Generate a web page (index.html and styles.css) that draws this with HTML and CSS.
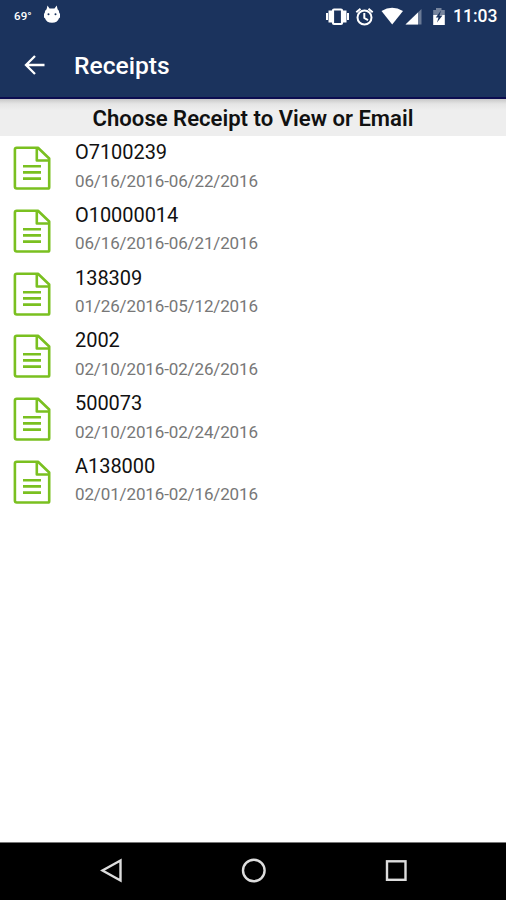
FILE: index.html
```html
<!DOCTYPE html>
<html lang="en">
<head>
<meta charset="utf-8">
<title>Receipts</title>
<link rel="stylesheet" href="styles.css">
</head>
<body>
<svg class="defs" width="0" height="0" aria-hidden="true">
  <symbol id="doc" viewBox="0 0 40 46">
    <path d="M4.8 2.7H26L37.2 13.5V42.2Q37.2 43.5 35.9 43.5H4.8Q2.9 43.5 2.9 41.6V4.6Q2.9 2.7 4.8 2.7ZM24.8 3V15.5H37M11 21.2H29M11 27.4H29M11 33.6H29" fill="none" stroke="#7ac020" stroke-width="2.6" stroke-linejoin="round"/>
  </symbol>
</svg>
<header class="top">
  <div class="status">
    <span class="temp">69°</span>
    <svg class="cat" width="18" height="20" viewBox="0 0 18 20"><path fill="#fff" fill-rule="evenodd" d="M4.5 1.5 6.5 4.5H11.5L13.7 1.5 14.6 5.2Q16.3 6.5 16.3 9L17 9.8V13.5L16 14.2Q14.5 18.8 9 18.8T2 14.2L1 13.5V9.8L1.7 9Q1.7 6.5 3.6 5.2ZM5.5 9.2A1 1 0 1 0 5.5 11.2A1 1 0 1 0 5.5 9.2ZM12.5 9.2A1 1 0 1 0 12.5 11.2A1 1 0 1 0 12.5 9.2Z"/></svg>
    <svg class="indicators" width="124" height="24" viewBox="0 0 124 24">
      <g fill="#fff">
        <path d="M0 11H2V18H0ZM2.5 8.5H6V20.5H2.5ZM21 11H23V18H21ZM17 8.5H20.5V20.5H17Z"/>
        <rect x="7" y="7.5" width="9" height="14.5" rx="1" fill="none" stroke="#fff" stroke-width="2.2"/>
        <path d="M55.5 9Q66 2.5 77 9L66.2 22.5Z"/>
        <path d="M95.5 7V22.5H79.5Z" fill-opacity=".35"/>
        <path d="M92 10.5V22.5H79.5Z"/>
        <path d="M107.2 8H110V6H115.5V8H118.8V13H107.2Z" fill-opacity=".4"/>
        <path d="M107.2 13H118.8V23H107.2Z"/>
      </g>
      <path d="M115 8.5 109.8 15.5H112.5L111 20.5 116.5 13.5H113.5Z" fill="#1b335d"/>
      <g fill="none" stroke="#fff" stroke-width="2">
        <circle cx="38.5" cy="15.5" r="7"/>
        <path d="M30.3 10.2 34.5 6.7M46.7 10.2 42.5 6.7M38.3 11V16L42 18.2"/>
      </g>
    </svg>
    <span class="clock">11:03</span>
  </div>
  <div class="bar">
    <svg class="back" width="22" height="22" viewBox="0 0 22 22"><path d="M20.5 11H2.5M11 2 2 11 11 20" fill="none" stroke="#fff" stroke-width="2.3"/></svg>
    <h1>Receipts</h1>
  </div>
</header>
<main>
  <h2>Choose Receipt to View or Email</h2>
  <ul class="list">
    <li><svg class="doc"><use href="#doc"/></svg><div><p class="num">O7100239</p><p class="date">06/16/2016-06/22/2016</p></div></li>
    <li><svg class="doc"><use href="#doc"/></svg><div><p class="num">O10000014</p><p class="date">06/16/2016-06/21/2016</p></div></li>
    <li><svg class="doc"><use href="#doc"/></svg><div><p class="num">138309</p><p class="date">01/26/2016-05/12/2016</p></div></li>
    <li><svg class="doc"><use href="#doc"/></svg><div><p class="num">2002</p><p class="date">02/10/2016-02/26/2016</p></div></li>
    <li><svg class="doc"><use href="#doc"/></svg><div><p class="num">500073</p><p class="date">02/10/2016-02/24/2016</p></div></li>
    <li><svg class="doc"><use href="#doc"/></svg><div><p class="num">A138000</p><p class="date">02/01/2016-02/16/2016</p></div></li>
  </ul>
</main>
<nav class="nav">
  <svg width="26" height="26" viewBox="0 0 26 26"><path d="M22.5 2.5V22.5L4.5 12.5Z"/></svg>
  <svg width="26" height="26" viewBox="0 0 26 26"><circle cx="12.8" cy="12.5" r="10.8"/></svg>
  <svg width="26" height="26" viewBox="0 0 26 26"><rect x="4" y="3.3" width="18.5" height="18.5"/></svg>
</nav>
</body>
</html>
```

FILE: styles.css
```css
* { box-sizing: border-box; margin: 0; padding: 0; }
body {
  display: flex;
  flex-direction: column;
  height: 900px;
  overflow: hidden;
  background: #fff;
  color: #111;
  font-family: Roboto, "Liberation Sans", sans-serif;
}
.defs { position: absolute; }
.top {
  height: 99px;
  background: #1b335d;
  border-bottom: 2px solid #0c0d50;
  color: #fff;
}
.status {
  display: flex;
  align-items: center;
  height: 32px;
  padding: 0 9px 0 14px;
}
.temp { width: 29px; margin-top: -1px; font-size: 11.5px; font-weight: 500; letter-spacing: .1px; }
.cat { margin-top: -4px; }
.indicators { margin: -5px 0 0 auto; }
.clock { width: 44px; margin-left: 3px; font-size: 17.5px; font-weight: 500; white-space: nowrap; }
.bar { display: flex; align-items: center; height: 65px; padding-left: 24px; }
.back { margin-right: 28px; }
h1 { padding-top: 2px; font-size: 24.6px; font-weight: 500; line-height: 30px; }
h2 {
  height: 37px;
  padding-top: 1px;
  background: linear-gradient(#c8c8c8, #e5e5e5 5px, #eee 11px);
  font-size: 22.1px;
  font-weight: 600;
  line-height: 37px;
  text-align: center;
}
main { flex: 1; }
.list { list-style: none; }
li { display: flex; height: 62.8px; padding-left: 12px; }
.doc { width: 40px; height: 46px; margin: 9px 23px 0 0; }
.num { padding-top: 4px; font-size: 20px; line-height: 25px; letter-spacing: -.05px; }
.date { padding-top: 3.5px; color: #777; font-size: 17px; line-height: 24px; letter-spacing: -.13px; }
.nav {
  display: flex;
  justify-content: space-between;
  height: 58px;
  padding: 15px 97px 0 98px;
  background: #000;
  border-top: 1px solid #777;
}
.nav svg { fill: none; stroke: #ddd; stroke-width: 2.4; }
```
